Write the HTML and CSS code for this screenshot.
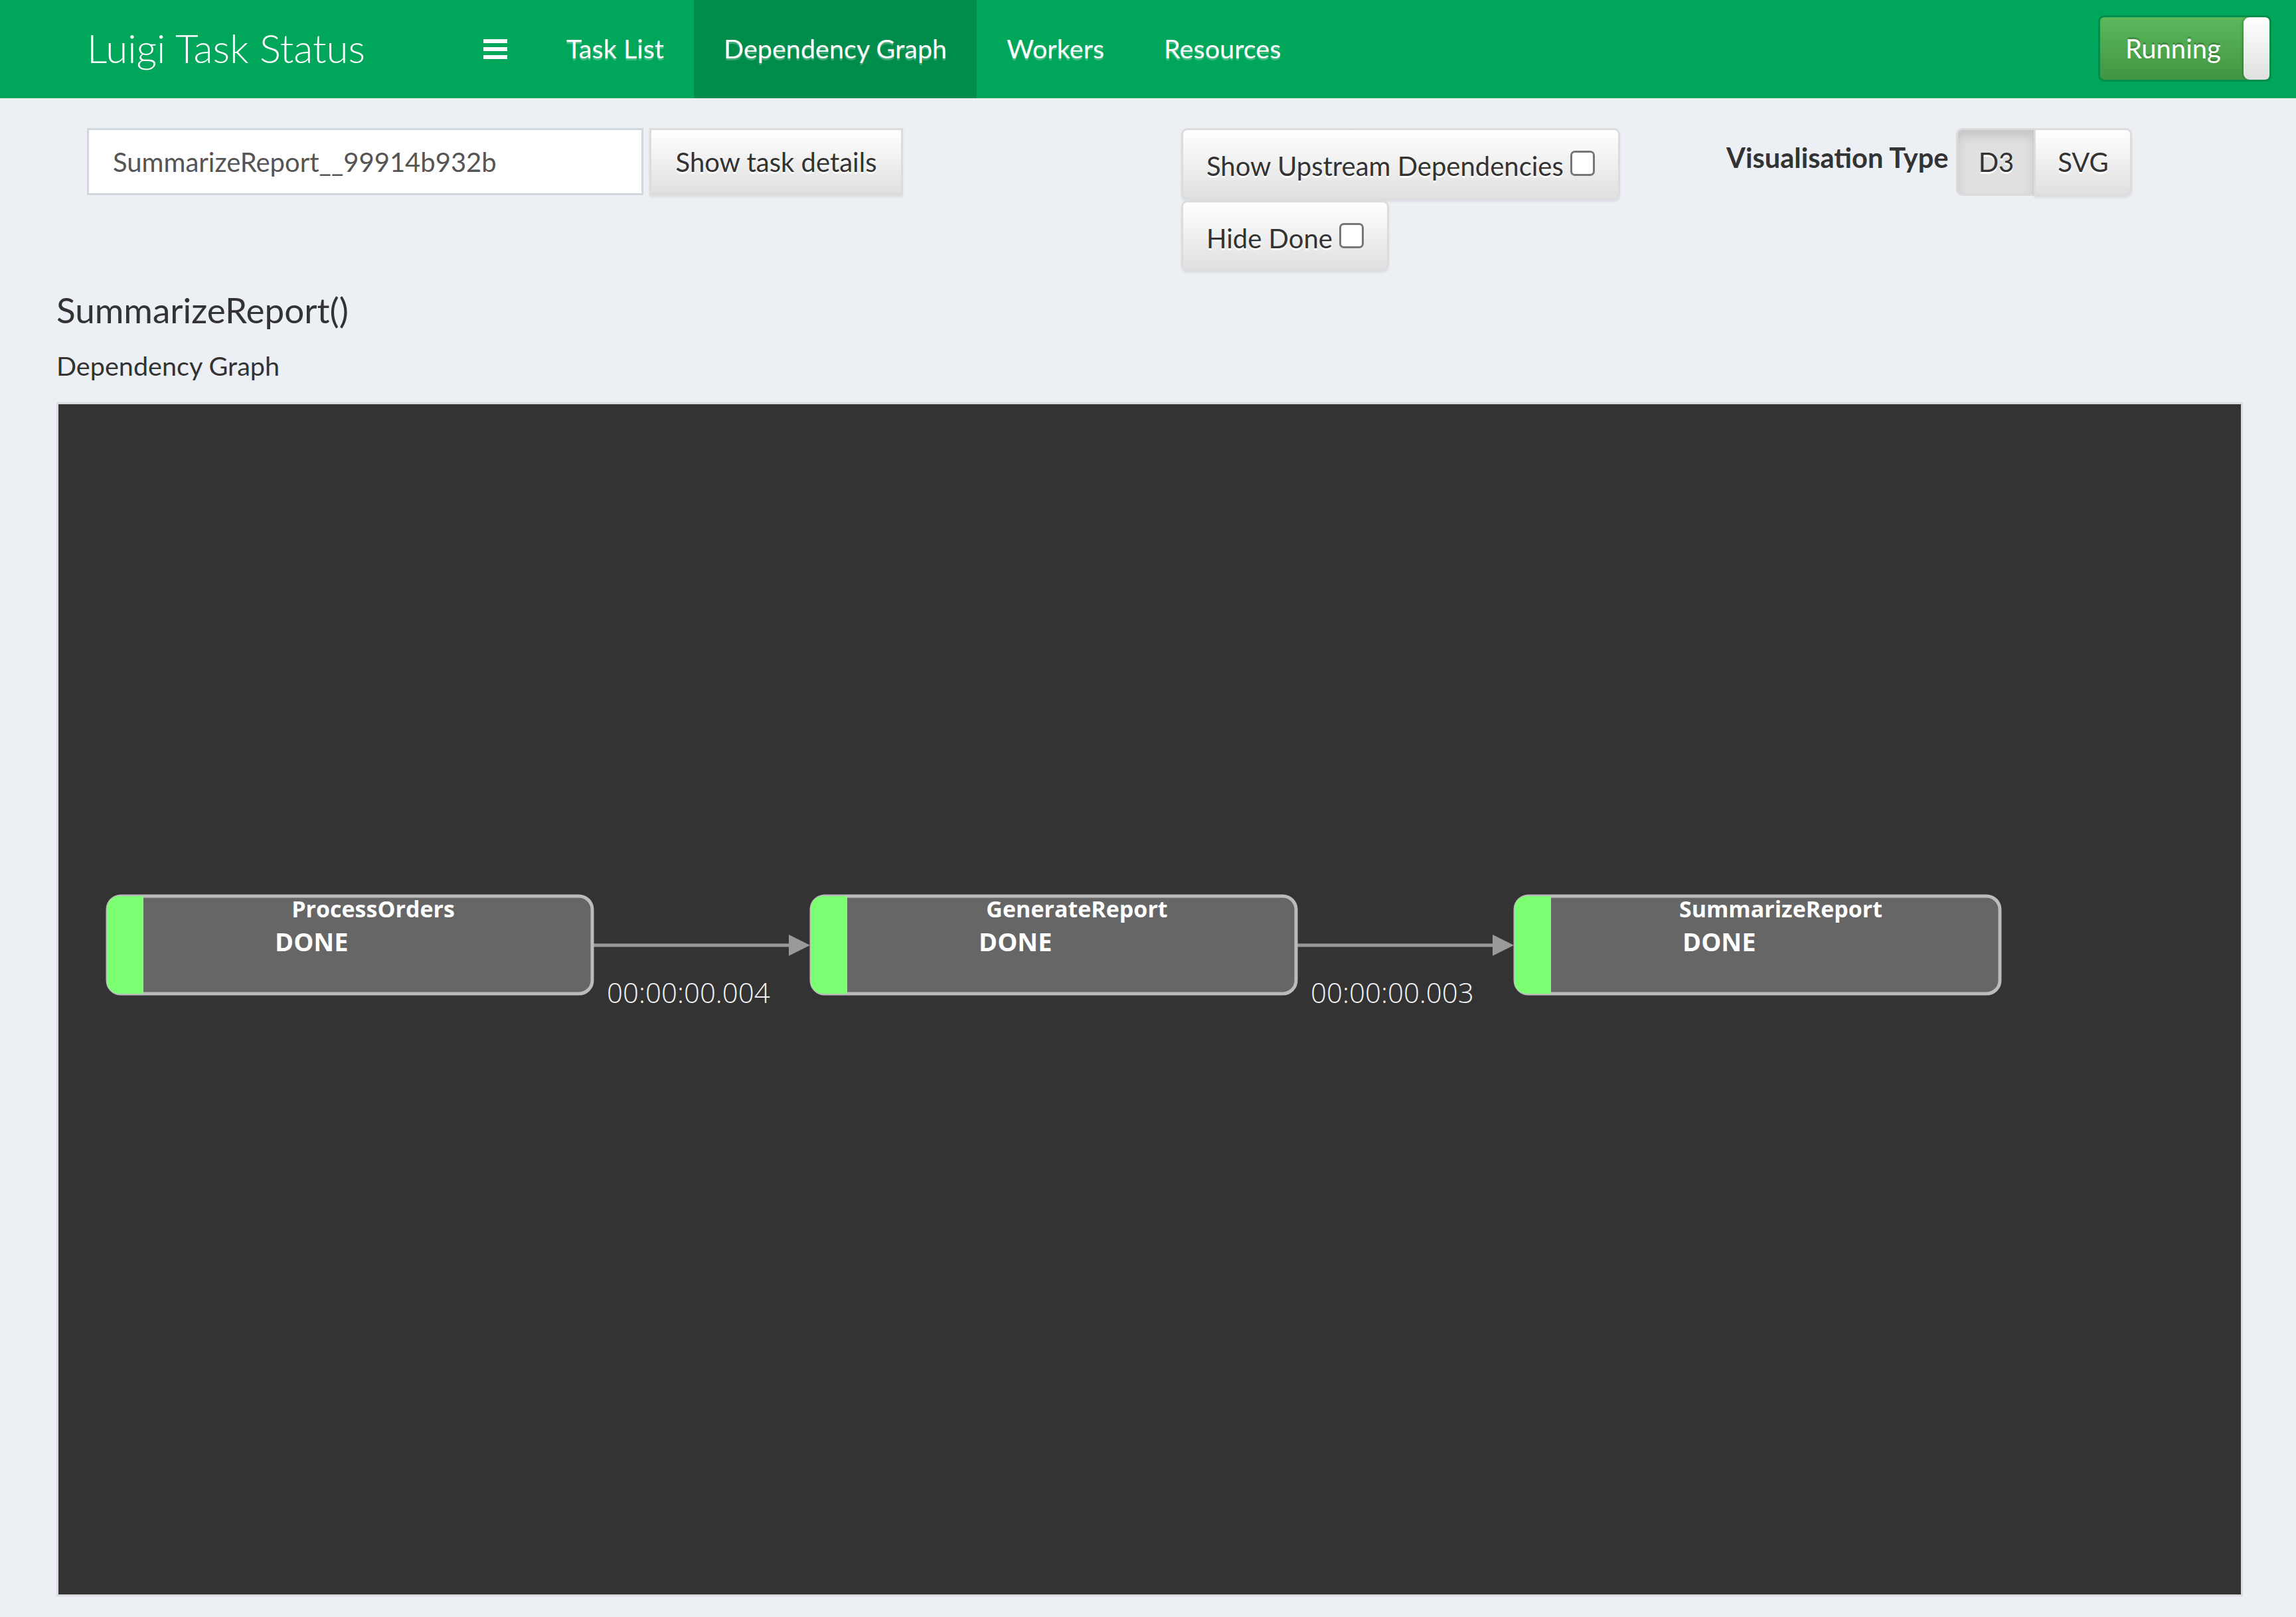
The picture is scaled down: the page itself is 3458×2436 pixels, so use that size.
FILE: index.html
```html
<!DOCTYPE html>
<html>
<head>
<meta charset="utf-8">
<title>Luigi Task Status</title>
<link rel="stylesheet" href="styles.css">
</head>
<body>
<header class="topbar">
  <a class="brand">Luigi Task Status</a>
  <a class="toggle"><span class="bars"><i></i><i></i><i></i></span></a>
  <nav class="menu">
    <a class="menu-item">Task List</a>
    <a class="menu-item active">Dependency Graph</a>
    <a class="menu-item">Workers</a>
    <a class="menu-item">Resources</a>
  </nav>
  <div class="spacer"></div>
  <button class="running"><span class="running-text">Running</span><span class="handle"></span></button>
</header>
<main class="content">
  <div class="toolbar">
    <div class="cell cell-search">
      <div class="search">
        <input class="task-input" type="text" value="SummarizeReport__99914b932b">
        <button class="btn btn-details">Show task details</button>
      </div>
    </div>
    <div class="cell cell-toggles">
      <label class="btn toggle-btn upstream">Show Upstream Dependencies<span class="check"></span></label>
      <label class="btn toggle-btn hide-done">Hide Done<span class="check"></span></label>
    </div>
    <div class="cell cell-vis">
      <span class="vis-label">Visualisation Type</span>
      <div class="btn-group">
        <button class="btn seg seg-d3 active">D3</button>
        <button class="btn seg seg-svg">SVG</button>
      </div>
    </div>
  </div>
  <h4 class="task-title">SummarizeReport()</h4>
  <div class="subtitle">Dependency Graph</div>
  <div class="graph">
    <svg class="graph-svg" width="3287" height="1793" viewBox="0 0 3287 1793">
      <defs>
        <clipPath id="clip1"><rect x="73" y="741" width="733" height="147" rx="19"/></clipPath>
        <clipPath id="clip2"><rect x="1133" y="741" width="733" height="147" rx="19"/></clipPath>
        <clipPath id="clip3"><rect x="2193" y="741" width="733" height="147" rx="19"/></clipPath>
      </defs>

      <g class="edge">
        <line x1="806" y1="815" x2="1102" y2="815"/>
        <polygon points="1100,799 1132,815 1100,831"/>
      </g>
      <text class="duration" x="826" y="902">00:00:00.004</text>

      <g class="edge">
        <line x1="1866" y1="815" x2="2162" y2="815"/>
        <polygon points="2160,799 2192,815 2160,831"/>
      </g>
      <text class="duration" x="1886" y="902">00:00:00.003</text>

      <g class="node">
        <rect class="node-box" x="74" y="741" width="730" height="147" rx="20"/>
        <rect class="node-status" x="73" y="741" width="55" height="147" clip-path="url(#clip1)"/>
        <text class="node-name" x="474" y="773">ProcessOrders</text>
        <text class="node-state" x="326" y="824">DONE</text>
      </g>
      <g class="node">
        <rect class="node-box" x="1134" y="741" width="730" height="147" rx="20"/>
        <rect class="node-status" x="1133" y="741" width="55" height="147" clip-path="url(#clip2)"/>
        <text class="node-name" x="1534" y="773">GenerateReport</text>
        <text class="node-state" x="1386" y="824">DONE</text>
      </g>
      <g class="node">
        <rect class="node-box" x="2194" y="741" width="730" height="147" rx="20"/>
        <rect class="node-status" x="2193" y="741" width="55" height="147" clip-path="url(#clip3)"/>
        <text class="node-name" x="2594" y="773">SummarizeReport</text>
        <text class="node-state" x="2446" y="824">DONE</text>
      </g>
    </svg>
  </div>
</main>
</body>
</html>
```
FILE: styles.css
```css
* { box-sizing: border-box; }
html, body { margin: 0; padding: 0; }
body {
  background: #ecf0f5;
  font-family: Lato, "Open Sans", sans-serif;
  color: #333;
  width: 3458px;
  height: 2436px;
  overflow: hidden;
}

/* ---------- top bar ---------- */
.topbar {
  height: 148px;
  background: #00a65a;
  display: flex;
  align-items: stretch;
}
.brand {
  width: 681px;
  display: flex;
  align-items: center;
  justify-content: center;
  padding-bottom: 5px;
  color: #fff;
  font-family: Lato, Roboto, sans-serif;
  font-weight: 300;
  font-size: 60px;
}
.toggle {
  display: flex;
  align-items: center;
  padding: 0 44px 0 47px;
}
.bars {
  display: flex;
  flex-direction: column;
  gap: 6px;
  width: 36px;
}
.bars i {
  display: block;
  height: 6px;
  background: #fff;
}
.menu { display: flex; }
.menu-item {
  display: flex;
  align-items: center;
  padding: 0 45px 3px;
  color: #fff;
  font-size: 39.6px;
  text-shadow: 0 3px 0 rgba(255,255,255,.25);
}
.menu-item.active { background: #008d4c; }
.spacer { flex: 1; }
.running {
  align-self: flex-start;
  margin: 23px 37px 0 0;
  height: 100px;
  width: 261px;
  display: flex;
  align-items: stretch;
  padding: 0;
  border: 3px solid #008d4c;
  border-radius: 9px;
  background: linear-gradient(#5cb85c, #419641);
  color: #fff;
  font-family: Lato, "Open Sans", sans-serif;
  font-size: 40px;
  text-shadow: 0 -3px 0 rgba(0,0,0,.2);
  overflow: hidden;
}
.running-text {
  flex: 1;
  display: flex;
  align-items: center;
  padding-left: 38px;
}
.handle {
  width: 39px;
  background: linear-gradient(#fff, #e0e0e0);
  border-radius: 9px 6px 6px 9px;
  box-shadow: -2px 0 3px rgba(0,0,0,.2);
}

/* ---------- content ---------- */
.content { padding: 45px 80px 0 85px; }
.toolbar {
  display: grid;
  grid-template-columns: 1646px 824px 1fr;
}
.cell-search { padding-left: 46px; }
.cell-toggles { padding-left: 48px; display: flex; flex-direction: column; align-items: flex-start; }
.cell-vis { padding-left: 45px; display: flex; align-items: flex-start; }

.search { display: flex; }
.task-input {
  width: 838px;
  height: 101px;
  border: 3px solid #d2d6de;
  border-radius: 0;
  padding: 0 36px;
  font-family: Lato, "Open Sans", sans-serif;
  font-size: 40px;
  color: #555;
  background: #fff;
  outline: none;
}
.btn {
  font-family: Lato, "Open Sans", sans-serif;
  font-size: 40px;
  color: #333;
  background: linear-gradient(#fff, #e0e0e0);
  border: 3px solid #dcdcdc;
  border-radius: 9px;
  text-shadow: 0 3px 0 #fff;
  box-shadow: 0 3px 3px rgba(0,0,0,.075);
  padding: 0;
}
.btn-details {
  margin-left: 9px;
  width: 382px;
  height: 101px;
  border-radius: 0;
}
.toggle-btn {
  display: block;
  padding: 4px 35px 0;
  line-height: 100px;
  white-space: nowrap;
}
.upstream { height: 108px; }
.hide-done { height: 106px; margin-top: 1px; }
.check {
  display: inline-block;
  width: 37px;
  height: 38px;
  margin-left: 10px;
  border: 3px solid #767676;
  border-radius: 7px;
  background: #fff;
  vertical-align: baseline;
}
.vis-label {
  font-weight: 700;
  font-size: 41.6px;
  margin: 15px 12px 0 0;
  line-height: 58px;
}
.btn-group { display: flex; }
.seg { height: 102px; }
.seg-d3 {
  width: 120px;
  border-radius: 9px 0 0 9px;
}
.seg-d3.active {
  background: #e0e0e0;
  border-color: #dbdbdb;
  box-shadow: inset 0 9px 15px rgba(0,0,0,.125);
}
.seg-svg {
  width: 148px;
  margin-left: -3px;
  border-radius: 0 9px 9px 0;
}

.task-title {
  margin: 30px 0 0;
  font-weight: 400;
  font-size: 53px;
  line-height: 57px;
  color: #333;
}
.subtitle {
  margin-top: 27px;
  font-size: 39.6px;
  line-height: 57px;
  color: #333;
}
.graph {
  margin-top: 27px;
  height: 1799px;
  border: 3px solid #dcdcdc;
  background: #333;
}
.graph-svg { display: block; }

.edge line { stroke: #999; stroke-width: 5; }
.edge polygon { fill: #999; }
.node-box { fill: #666; stroke: #bbb; stroke-width: 5; }
.node-status { fill: #7dff73; }
.node-name {
  fill: #fff;
  font-family: "Open Sans", sans-serif;
  font-weight: 700;
  font-size: 34px;
  text-anchor: middle;
}
.node-state {
  fill: #fff;
  font-family: "Open Sans", sans-serif;
  font-weight: 700;
  font-size: 38px;
}
.duration {
  fill: #f2f2f2;
  font-family: "Open Sans", sans-serif;
  font-weight: 300;
  font-size: 42px;
}
```
